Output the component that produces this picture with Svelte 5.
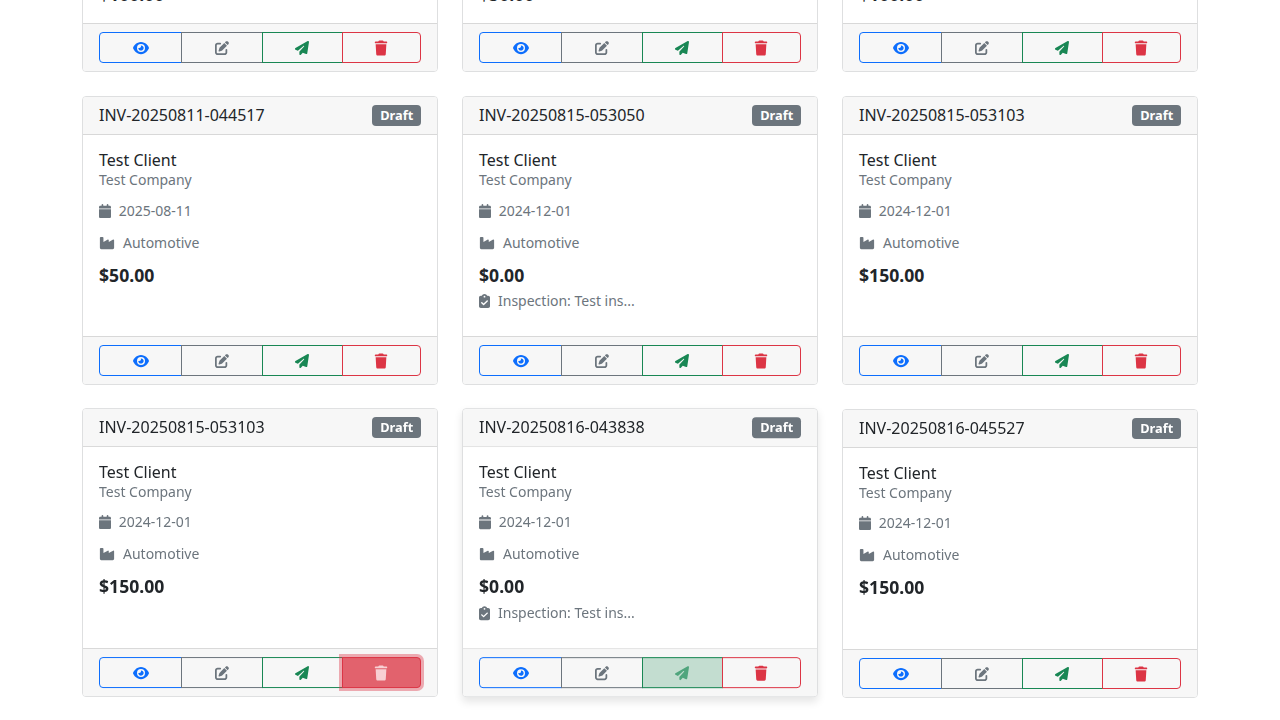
<script>
  const icons = {
    eye: [576, 'M288 32c-80.8 0-145.5 36.8-192.6 80.6C48.6 156 17.3 208 2.5 243.7c-3.3 7.9-3.3 16.7 0 24.6C17.3 304 48.6 356 95.4 399.4C142.5 443.2 207.2 480 288 480s145.5-36.8 192.6-80.6c46.8-43.5 78.1-95.4 93-131.1c3.3-7.9 3.3-16.7 0-24.6c-14.9-35.7-46.2-87.7-93-131.1C433.5 68.8 368.8 32 288 32zM144 256a144 144 0 1 1 288 0 144 144 0 1 1 -288 0zm144-64c0 35.3-28.7 64-64 64c-7.1 0-13.9-1.2-20.3-3.3c-5.5-1.8-11.9 1.6-11.7 7.4c.3 6.9 1.3 13.8 3.2 20.7c13.7 51.2 66.4 81.6 117.6 67.9s81.6-66.4 67.9-117.6c-11.1-41.5-47.8-69.4-88.6-71.1c-5.8-.2-9.2 6.1-7.4 11.7c2.1 6.4 3.3 13.2 3.3 20.3z'],
    edit: [512, 'M471.6 21.7c-21.9-21.9-57.3-21.9-79.2 0L362.3 51.7l97.9 97.9 30.1-30.1c21.9-21.9 21.9-57.3 0-79.2L471.6 21.7zm-299.2 220c-6.1 6.1-10.8 13.6-13.5 21.9l-29.6 88.8c-2.9 8.6-.6 18.1 5.8 24.6s15.9 8.7 24.6 5.8l88.8-29.6c8.2-2.7 15.7-7.4 21.9-13.5L437.7 172.3 339.7 74.3 172.4 241.7zM96 64C43 64 0 107 0 160V416c0 53 43 96 96 96H352c53 0 96-43 96-96V320c0-17.7-14.3-32-32-32s-32 14.3-32 32v96c0 17.7-14.3 32-32 32H96c-17.7 0-32-14.3-32-32V160c0-17.7 14.3-32 32-32h96c17.7 0 32-14.3 32-32s-14.3-32-32-32H96z'],
    send: [512, 'M498.1 5.6c10.1 7 15.4 19.1 13.5 31.2l-64 416c-1.5 9.7-7.4 18.2-16 23s-18.9 5.4-28 1.6L284 427.7l-68.5 74.1c-8.9 9.7-22.9 12.9-35.2 8.1S160 493.2 160 480V396.4c0-4 1.5-7.8 4.2-10.7L331.8 202.8c5.8-6.3 5.6-16-.4-22s-15.7-6.4-22-.7L106 360.8 17.7 316.6C7.1 311.3 .3 300.7 0 288.9s5.9-22.8 16.1-28.7l448-256c10.7-6.1 23.9-5.5 34 1.4z'],
    trash: [448, 'M135.2 17.7L128 32H32C14.3 32 0 46.3 0 64S14.3 96 32 96H416c17.7 0 32-14.3 32-32s-14.3-32-32-32H320l-7.2-14.3C307.4 6.8 296.3 0 284.2 0H163.8c-12.1 0-23.2 6.8-28.6 17.7zM416 128H32L53.2 467c1.6 25.3 22.6 45 47.9 45H346.9c25.3 0 46.3-19.7 47.9-45L416 128z'],
    calendar: [448, 'M96 32V64H48C21.5 64 0 85.5 0 112v48H448V112c0-26.5-21.5-48-48-48H352V32c0-17.7-14.3-32-32-32s-32 14.3-32 32V64H160V32c0-17.7-14.3-32-32-32S96 14.3 96 32zM448 192H0V464c0 26.5 21.5 48 48 48H400c26.5 0 48-21.5 48-48V192z'],
    industry: [576, 'M64 32C46.3 32 32 46.3 32 64V304v48 80c0 26.5 21.5 48 48 48H496c26.5 0 48-21.5 48-48V304 152.2c0-18.2-19.4-29.7-35.4-21.1L352 215.4V152.2c0-18.2-19.4-29.7-35.4-21.1L160 215.4V64c0-17.7-14.3-32-32-32H64z'],
    clipboard: [384, 'M192 0c-41.8 0-77.4 26.7-90.5 64H64C28.7 64 0 92.7 0 128V448c0 35.3 28.7 64 64 64H320c35.3 0 64-28.7 64-64V128c0-35.3-28.7-64-64-64H282.5C269.4 26.7 233.8 0 192 0zm0 64a32 32 0 1 1 0 64 32 32 0 1 1 0-64zM305 273L177 401c-9.4 9.4-24.6 9.4-33.9 0L79 337c-9.4-9.4-9.4-24.6 0-33.9s24.6-9.4 33.9 0l47 47L271 239c9.4-9.4 24.6-9.4 33.9 0s9.4 24.6 0 33.9z']
  };

  const actions = [
    { icon: 'eye', tone: 'primary', label: 'View' },
    { icon: 'edit', tone: 'secondary', label: 'Edit' },
    { icon: 'send', tone: 'success', label: 'Send' },
    { icon: 'trash', tone: 'danger', label: 'Delete' }
  ];

  // Entries without a number are scrolled past; only their lower part is laid out.
  const invoices = [
    { amount: '$100.00' },
    { amount: '$50.00' },
    { amount: '$100.00' },
    { number: 'INV-20250811-044517', date: '2025-08-11', amount: '$50.00' },
    { number: 'INV-20250815-053050', date: '2024-12-01', amount: '$0.00', note: 'Inspection: Test ins...' },
    { number: 'INV-20250815-053103', date: '2024-12-01', amount: '$150.00' },
    { number: 'INV-20250815-053103', date: '2024-12-01', amount: '$150.00', state: 'settling', pressed: 'trash' },
    { number: 'INV-20250816-043838', date: '2024-12-01', amount: '$0.00', note: 'Inspection: Test ins...', state: 'raised', pressed: 'send' },
    { number: 'INV-20250816-045527', date: '2024-12-01', amount: '$150.00', state: 'layer' }
  ];
</script>

{#snippet icon(name)}
  <svg class="icon {name}" viewBox="0 0 {icons[name][0]} 512" preserveAspectRatio="none" style="width:{Math.round((icons[name][0] / 512) * 14 + 0.01)}px" aria-hidden="true">
    <path d={icons[name][1]} />
  </svg>
{/snippet}

<main>
  <div class="grid">
    {#each invoices as inv}
      <article class="card {inv.state ?? ''}">
        {#if inv.number}
          <header>
            <h6>{inv.number}</h6>
            <span class="badge">Draft</span>
          </header>
        {/if}
        <div class="body">
          {#if inv.number}
            <h6>Test Client</h6>
            <p class="company">Test Company</p>
            <div class="meta"><small>{@render icon('calendar')}{inv.date}</small></div>
            <div class="meta"><small>{@render icon('industry')}Automotive</small></div>
          {/if}
          <div class="amount"><strong>{inv.amount}</strong></div>
          {#if inv.note}
            <div class="meta"><small>{@render icon('clipboard')}{inv.note}</small></div>
          {/if}
        </div>
        <footer>
          <div class="group">
            {#each actions as a}
              <button class="btn {a.tone}" class:pressed={inv.pressed === a.icon} aria-label={a.label}>{@render icon(a.icon)}</button>
            {/each}
          </div>
        </footer>
      </article>
    {/each}
  </div>
</main>

<style>
  :global(body) {
    margin: 0;
    background: #fff;
  }
  main {
    box-sizing: border-box;
    height: 720px;
    overflow: hidden;
    display: flex;
    justify-content: center;
    align-items: flex-start;
    font: 16px/1.5 'Noto Sans', 'Liberation Sans', sans-serif;
    color: #212529;
  }
  .grid {
    display: grid;
    grid-template-columns: repeat(3, 356px);
    gap: 24px;
    margin-top: -36.15px;
  }
  .card {
    box-sizing: border-box;
    display: flex;
    flex-direction: column;
    border: 1px solid #dedfe0;
    border-radius: 4px;
    background: #fff;
  }
  .settling,
  .raised,
  .layer {
    will-change: transform;
  }
  .settling {
    transform: translateY(-0.95px);
  }
  .raised {
    transform: translateY(-0.85px);
    box-shadow: 0 4px 8px rgba(0, 0, 0, 0.1);
  }
  header {
    display: flex;
    justify-content: space-between;
    align-items: center;
    padding: 8px 16px;
    background: #f7f7f7;
    border-bottom: 1px solid #d8d8d8;
    border-radius: 3px 3px 0 0;
  }
  h6 {
    margin: 0;
    font-size: 16px;
    font-weight: 400;
    line-height: 1.2;
  }
  .badge {
    padding: 4.2px 7.8px;
    font-size: 12.8px;
    font-weight: 700;
    line-height: 12.8px;
    color: #fff;
    background: #6c757d;
    border-radius: 4px;
  }
  .body {
    flex: 1;
    padding: 16px;
  }
  .company {
    margin: -1.6px 0 7.6px;
    font-size: 14px;
    color: #6c757d;
  }
  .meta {
    margin-bottom: 8px;
    color: #6c757d;
  }
  .amount {
    font-size: 17.6px;
  }
  small {
    font-size: 14px;
  }
  .icon {
    height: 14px;
    fill: currentColor;
    vertical-align: -0.125em;
    overflow: visible;
  }
  .meta .icon {
    margin-right: 8px;
    vertical-align: -0.14em;
  }
  .meta .calendar {
    margin-right: 7.7px;
  }
  .btn .trash {
    transform: scale(1.04, 1.07);
  }
  footer {
    padding: 8px 16px;
    background: #f7f7f7;
    border-top: 1px solid #d8d8d8;
    border-radius: 0 0 3px 3px;
  }
  .group {
    display: flex;
  }
  .btn {
    position: relative;
    flex: 1 1 auto;
    margin: 0 0 0 -1px;
    padding: 4px 8px;
    font: inherit;
    font-size: 14px;
    line-height: 1.5;
    color: var(--tone);
    background: transparent;
    border: 1px solid var(--tone);
  }
  .btn:first-child {
    margin-left: 0;
    border-radius: 4px 0 0 4px;
  }
  .btn:last-child {
    border-radius: 0 4px 4px 0;
  }
  .primary { --tone: #0d6efd; }
  .secondary { --tone: #6c757d; }
  .success { --tone: #198754; }
  .danger { --tone: #dc3545; }
  .pressed.danger {
    color: #f8d0d4;
    background: #e2626d;
    box-shadow: 0 0 0 3px rgba(220, 53, 69, 0.4);
  }
  .pressed.success {
    color: #50a57d;
    background: #c3ddd0;
  }
</style>
